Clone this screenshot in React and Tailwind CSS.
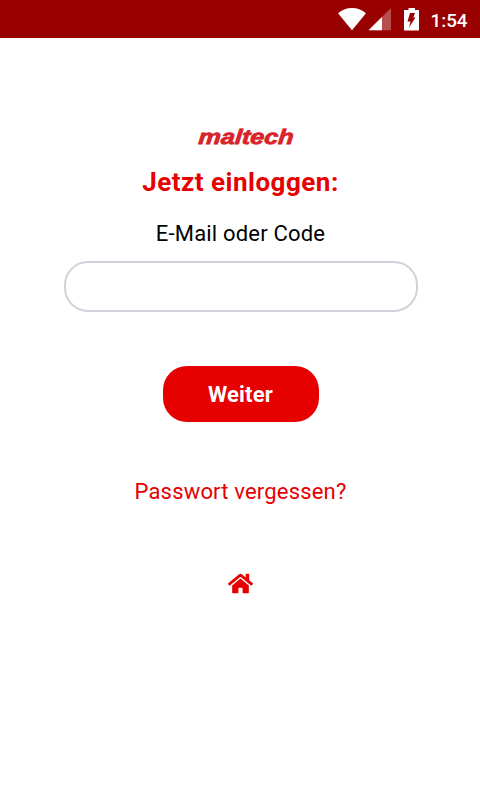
import React from 'react';
import { FaHome } from 'react-icons/fa';

const StatusBar = () => (
    <header className="h-[38px] bg-[#990000] text-white">
        <svg width="480" height="38" viewBox="0 0 480 38" fill="currentColor">
            <path d="M338 13.2C346 6.2 358 6.2 366 13.2L352 30.3Z" />
            <path d="M391 8V30.3H368.5Z" opacity="0.3" />
            <path d="M382 17V30.3H368.5Z" />
            <path fillRule="evenodd" d="M408.5 8H415V10H419V30.5H404V10H408.5ZM410 13H415L413.3 17.5H415.5L409 27.5L410.5 21.5H407.5Z" />
            <text x="430.5" y="26.5" fontFamily="Roboto, sans-serif" fontSize="19" fontWeight="500" textLength="37" lengthAdjust="spacingAndGlyphs">1:54</text>
        </svg>
    </header>
);

const Logo = () => (
    <svg width="110" height="22" viewBox="0 0 110 22" className="mt-[87px]" role="img" aria-label="maltech">
        <text
            x="12"
            y="18.5"
            transform="translate(1.7 0) skewX(-5)"
            fill="#d8232a"
            stroke="#d8232a"
            strokeWidth="0.8"
            fontFamily="Liberation Sans, sans-serif"
            fontSize="21"
            fontWeight="700"
            fontStyle="italic"
            textLength="95"
            lengthAdjust="spacingAndGlyphs"
        >
            maltech
        </text>
    </svg>
);

const App = () => (
    <div className="min-h-screen bg-white font-[Roboto,sans-serif]">
        <StatusBar />
        <main className="flex flex-col items-center pl-px">
            <Logo />
            <h1 className="mt-[19px] text-[26px] leading-8 font-bold tracking-[0.5px] text-[#e60000]">Jetzt einloggen:</h1>
            <label htmlFor="login" className="mt-[22px] text-[22px] leading-7 tracking-[0.18px] text-black">E-Mail oder Code</label>
            <input id="login" type="text" className="mt-[13px] h-[51px] w-[354px] rounded-[24px] border-2 border-[#ced4da] bg-white px-5 text-[22px] outline-none" />
            <button type="button" className="mt-[54px] h-[56px] w-[156px] rounded-[24px] bg-[#e60000] text-[22px] font-bold tracking-[0.2px] text-white">Weiter</button>
            <a href="#passwort" className="mt-[56px] text-[22px] leading-7 tracking-[0.18px] text-[#e60000]">Passwort vergessen?</a>
            <a href="#home" aria-label="Home" className="mt-[65px] text-[#e60000]">
                <FaHome className="size-[25px]" />
            </a>
        </main>
    </div>
);

export default App;
